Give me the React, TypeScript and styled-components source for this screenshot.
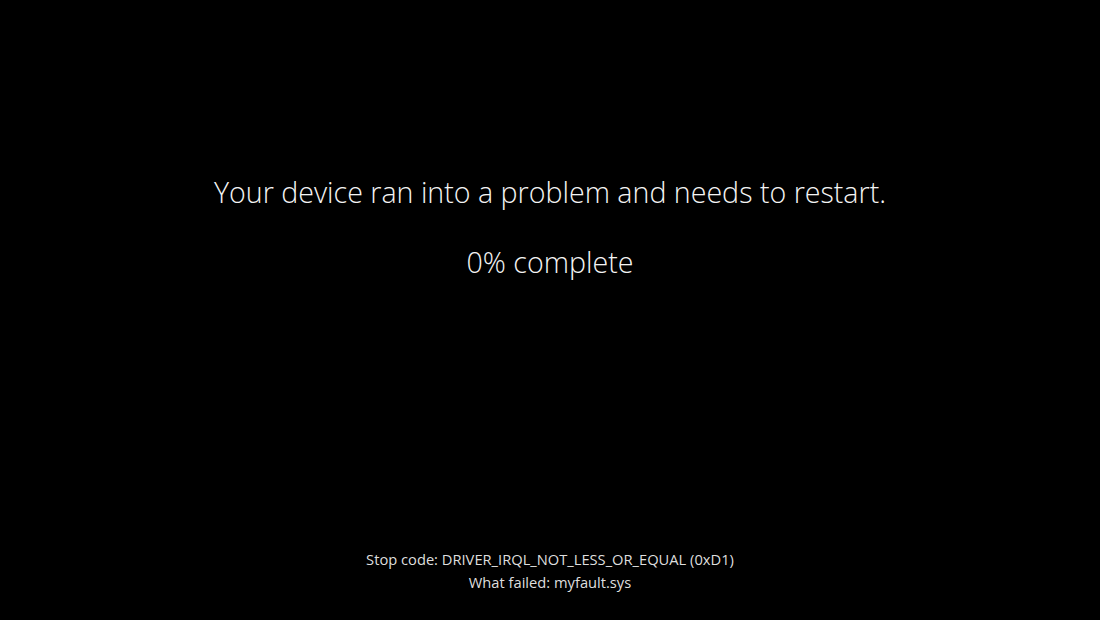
import React from "react";
import styled, { createGlobalStyle } from "styled-components";

const GlobalStyle = createGlobalStyle`
  html, body {
    margin: 0;
    padding: 0;
    background: #000000;
  }
  #root {
    height: 100vh;
  }
`;

export default function App() {
  return (
    <>
      <GlobalStyle />
      <Screen>
        <Center>
          <Message>Your device ran into a problem and needs to restart.</Message>
          <Message>0% complete</Message>
        </Center>
        <Details>
          <Line>Stop code: DRIVER_IRQL_NOT_LESS_OR_EQUAL (0xD1)</Line>
          <Line>What failed: myfault.sys</Line>
        </Details>
      </Screen>
    </>
  );
}

const Screen = styled.div`
  width: 100%;
  height: 100%;
  background-color: #000000;
  display: flex;
  flex-direction: column;
  align-items: center;
  font-family: "Open Sans", "Noto Sans", sans-serif;
  color: #f4f4f4;
  overflow: hidden;
`;
const Center = styled.div`
  flex: 1;
  display: flex;
  flex-direction: column;
  align-items: center;
  padding-top: 171px;
  gap: 29px;
`;
const Message = styled.p`
  margin: 0;
  font-size: 28.6px;
  font-weight: 300;
  line-height: 41px;
`;
const Details = styled.div`
  display: flex;
  flex-direction: column;
  align-items: center;
  gap: 3px;
  padding-bottom: 28px;
`;
const Line = styled.p`
  margin: 0;
  font-size: 14.7px;
  font-weight: 400;
  line-height: 20px;
  color: #dedede;
`;
